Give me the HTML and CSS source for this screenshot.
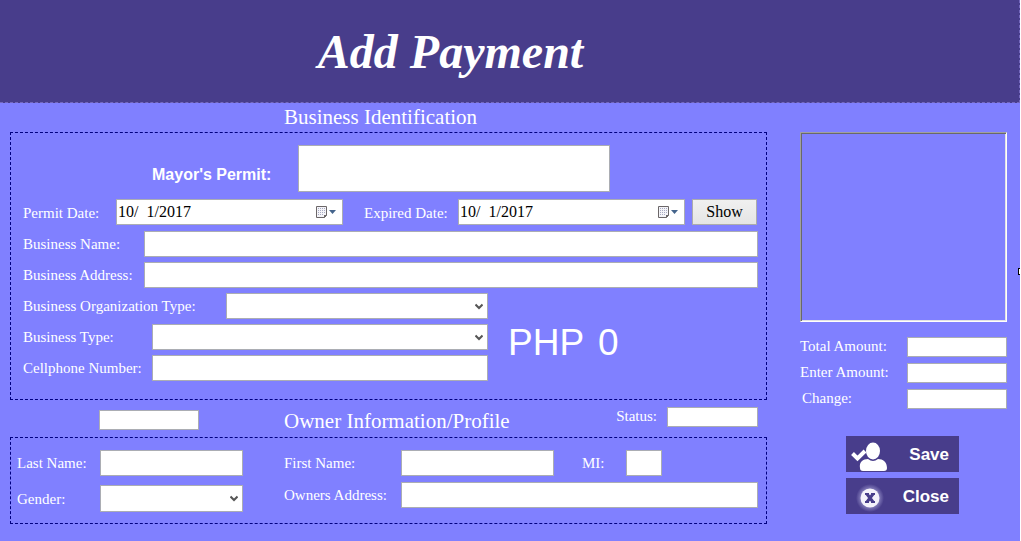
FILE: index.html
```html
<!DOCTYPE html>
<html lang="en">
<head>
<meta charset="utf-8">
<title>Add Payment</title>
<link rel="stylesheet" href="styles.css">
</head>
<body>
<header class="banner"><h1 class="banner-title">Add Payment</h1></header>
<main class="workspace">
  <form class="details" id="payment">
    <h2 class="section-title business-title">Business Identification</h2>
    <section class="panel business">
      <div class="row permit-row">
        <label class="permit-label" for="permit">Mayor's Permit:</label>
        <input class="field permit-field" id="permit" type="text">
      </div>
      <div class="row date-row">
        <label class="label-date" for="permit-date">Permit Date:</label>
        <div class="date">
          <input class="date-text" id="permit-date" type="text" value="10/  1/2017">
          <button class="date-button" type="button" aria-label="Choose permit date">
            <svg width="21" height="14" viewBox="0 0 21 14"><path d="M.5 1.500h10v9l-2 2h-8z" fill="#f4f4f8" stroke="#6b6668"/><path d="M2 3.500h7M2 5.500h7M2 7.500h7M2 9.500h5" stroke="#a9abc4" stroke-dasharray="1 1"/><path d="M8 13v-3h3z" fill="#6b6668"/><path d="M13 5h7l-3.500 4z" fill="#44648c"/></svg>
          </button>
        </div>
        <label class="label-expired" for="expired-date">Expired Date:</label>
        <div class="date">
          <input class="date-text" id="expired-date" type="text" value="10/  1/2017">
          <button class="date-button" type="button" aria-label="Choose expired date">
            <svg width="21" height="14" viewBox="0 0 21 14"><path d="M.5 1.500h10v9l-2 2h-8z" fill="#f4f4f8" stroke="#6b6668"/><path d="M2 3.500h7M2 5.500h7M2 7.500h7M2 9.500h5" stroke="#a9abc4" stroke-dasharray="1 1"/><path d="M8 13v-3h3z" fill="#6b6668"/><path d="M13 5h7l-3.500 4z" fill="#44648c"/></svg>
          </button>
        </div>
        <button class="show" type="button">Show</button>
      </div>
      <div class="row"><label class="label-name" for="name">Business Name:</label><input class="field" id="name" type="text"></div>
      <div class="row"><label class="label-name" for="address">Business Address:</label><input class="field" id="address" type="text"></div>
      <div class="split">
        <div class="stack">
          <div class="row"><label class="label-org" for="org">Business Organization Type:</label><select class="field select" id="org"><option></option></select></div>
          <div class="row"><label class="label-type" for="type">Business Type:</label><select class="field select" id="type"><option></option></select></div>
          <div class="row"><label class="label-type" for="cell">Cellphone Number:</label><input class="field" id="cell" type="text"></div>
        </div>
        <p class="amount"><span>PHP</span><output>0</output></p>
      </div>
    </section>
    <div class="between">
      <input class="field short record" type="text" aria-label="Record number">
      <h2 class="section-title owner-title">Owner Information/Profile</h2>
      <label class="label-status" for="status">Status:</label>
      <input class="field short status" id="status" type="text">
    </div>
    <section class="panel owner">
      <div class="owner-left">
        <div class="row"><label class="label-last" for="last">Last Name:</label><input class="field" id="last" type="text"></div>
        <div class="row"><label class="label-last" for="gender">Gender:</label><select class="field select gender" id="gender"><option></option></select></div>
      </div>
      <div class="owner-right">
        <div class="row first-row">
          <label class="label-first" for="first">First Name:</label><input class="field" id="first" type="text">
          <label class="label-mi" for="mi">MI:</label><input class="field mi" id="mi" type="text">
        </div>
        <div class="row"><label class="label-first" for="owner-address">Owners Address:</label><input class="field" id="owner-address" type="text"></div>
      </div>
    </section>
  </form>
  <aside class="side">
    <div class="picture"></div>
    <div class="totals">
      <div class="row"><label class="label-total" for="total">Total Amount:</label><input class="field short" id="total" type="text"></div>
      <div class="row"><label class="label-total" for="enter">Enter Amount:</label><input class="field short" id="enter" type="text"></div>
      <div class="row"><label class="label-total label-change" for="change">Change:</label><input class="field short" id="change" type="text"></div>
    </div>
    <div class="actions">
      <button class="action" type="submit" form="payment">
        <svg width="42" height="32" viewBox="0 0 42 32" fill="#fff"><ellipse cx="24" cy="12" rx="7" ry="8.500"/><path d="M11 29c-1-6 3-9 8-9q5 4 10 0c5 0 9 3 9 9q0 3-3 3H14q-3 0-3-3z"/><path d="M3.500 14.500l5 5L16 12" fill="none" stroke="#fff" stroke-width="4"/></svg>
        <span>Save</span>
      </button>
      <button class="action" type="button">
        <svg width="42" height="32" viewBox="0 0 42 32"><defs><radialGradient id="halo"><stop offset=".6" stop-color="#aaa5d8" stop-opacity=".7"/><stop offset="1" stop-color="#aaa5d8" stop-opacity="0"/></radialGradient></defs><circle cx="21" cy="17" r="14" fill="url(#halo)"/><circle cx="21" cy="17" r="9.500" fill="#f3f1fa"/><path d="M18 13l6 8M24 13l-6 8" stroke="#483d8b" stroke-width="3"/><path d="M16 13h4M22 13h4M16 21h4M22 21h4" stroke="#483d8b" stroke-width="2"/></svg>
        <span>Close</span>
      </button>
    </div>
  </aside>
</main>
<div class="resize-handle"></div>
</body>
</html>
```
FILE: styles.css
```css
* { box-sizing: border-box; }

body {
  margin: 0;
  min-height: 100vh;
  position: relative;
  border-right: 1px solid #fff;
  background: #8080ff;
  color: #fff;
  font: 15px/18px "Liberation Serif", "Times New Roman", serif;
}

button, input, select { font: inherit; border-radius: 0; margin: 0; }
h1, h2, p { margin: 0; font-weight: normal; }

.banner {
  display: flex;
  justify-content: center;
  padding: 22px 118px 20px 0;
  background: #483d8b;
  border: 1px dashed #7468bd;
  border-width: 0 1px 1px 0;
}
.banner-title {
  font: italic bold 48px/60px "Brush Script MT", "Liberation Serif", serif;
}

.workspace {
  display: flex;
  gap: 33px;
  padding: 0 13px 17px 10px;
}
.details { flex: 1; min-width: 0; }

.section-title { font-size: 21px; line-height: 24px; }
.business-title { padding: 2px 0 3px 274px; }

.panel { border: 1px dashed #000080; }
.business {
  display: flex;
  flex-direction: column;
  gap: 5px;
  padding: 12px 8px 18px 12px;
}

.row { display: flex; align-items: center; }
.row label { flex: none; white-space: nowrap; }

.field {
  flex: 1;
  min-width: 0;
  height: 26px;
  padding: 0 4px;
  border: 1px solid #abadb3;
  background: #fff;
  color: #000;
}
.short { height: 20px; }
.select {
  appearance: none;
  background: #fff url("data:image/svg+xml,%3Csvg xmlns='http://www.w3.org/2000/svg' width='8' height='7'%3E%3Cpath d='M.5 1.500L4 5l3.500-3.500' fill='none' stroke='%23555' stroke-width='2'/%3E%3C/svg%3E") no-repeat right 4px center;
}
.gender { height: 27px; }

.permit-row { padding: 0 148px 0 129px; margin-bottom: 2px; }
.permit-label {
  width: 146px;
  padding-top: 12px;
  font: bold 16px/18px "Liberation Sans", Arial, sans-serif;
}
.permit-field { height: 47px; font-size: 21px; }

.date-row { margin-bottom: 1px; }
.label-date { width: 93px; padding-top: 2px; }
.label-expired { width: 115px; padding: 2px 0 0 21px; }
.date {
  flex: 1;
  min-width: 0;
  height: 26px;
  display: flex;
  align-items: center;
  padding: 0 5px 0 1px;
  border: 1px solid #abadb3;
  background: #fff;
}
.date-text {
  flex: 1;
  min-width: 0;
  padding: 0;
  border: 0;
  background: none;
  color: #000;
  font-size: 16px;
}
.date-button { display: flex; padding: 0; border: 0; background: none; }
.show {
  width: 65px;
  height: 26px;
  margin: 0 1px 0 7px;
  padding: 0;
  border: 1px solid #acacac;
  background: linear-gradient(#f0f0f0, #e5e5e5);
  color: #000;
  font-size: 16px;
}

.label-name { width: 121px; }
.label-org { width: 203px; }
.label-type { width: 129px; }

.split { display: flex; }
.stack {
  flex: 465;
  min-width: 0;
  display: flex;
  flex-direction: column;
  gap: 5px;
}
.amount {
  flex: 250;
  display: flex;
  align-items: center;
  gap: 14px;
  padding: 12px 0 0 20px;
  font: 37px/40px "Liberation Sans", Arial, sans-serif;
}

.between {
  display: flex;
  align-items: flex-start;
  padding: 7px 9px 4px 89px;
}
.record { flex: none; width: 100px; margin-top: 3px; }
.owner-title { padding: 2px 0 0 85px; }
.label-status { margin-left: auto; padding-right: 10px; }
.status { flex: none; width: 91px; }

.owner { display: flex; gap: 41px; padding: 12px 8px 11px 6px; }
.owner-left {
  flex: 226;
  min-width: 0;
  display: flex;
  flex-direction: column;
  gap: 9px;
}
.owner-right {
  flex: 474;
  min-width: 0;
  display: flex;
  flex-direction: column;
  gap: 6px;
}
.label-last { width: 83px; }
.label-first { width: 117px; }
.first-row { padding-right: 96px; }
.label-mi { width: 72px; padding-left: 28px; }
.first-row .mi { flex: none; width: 36px; }

.side { width: 207px; flex: none; padding-top: 29px; }
.picture {
  height: 190px;
  border: 1px solid;
  border-color: #a0a0a0 #fff #fff #a0a0a0;
  box-shadow: inset 1px 1px #696969, inset -1px -1px #e3e3e3;
}
.totals { display: flex; flex-direction: column; gap: 6px; padding-top: 15px; }
.label-total { width: 107px; padding-bottom: 2px; }
.label-change { padding-left: 2px; }

.actions {
  display: flex;
  flex-direction: column;
  gap: 6px;
  padding: 27px 48px 0 46px;
}
.action {
  height: 36px;
  display: flex;
  align-items: center;
  justify-content: space-between;
  padding: 1px 10px 0 3px;
  border: 0;
  background: #483d8b;
  color: #fff;
  font: bold 17px/20px "Liberation Sans", Arial, sans-serif;
}

.resize-handle {
  position: absolute;
  top: 268px;
  right: 0;
  width: 2px;
  height: 7px;
  border: 1px solid #000;
  border-right: 0;
  background: #fff;
}
```
